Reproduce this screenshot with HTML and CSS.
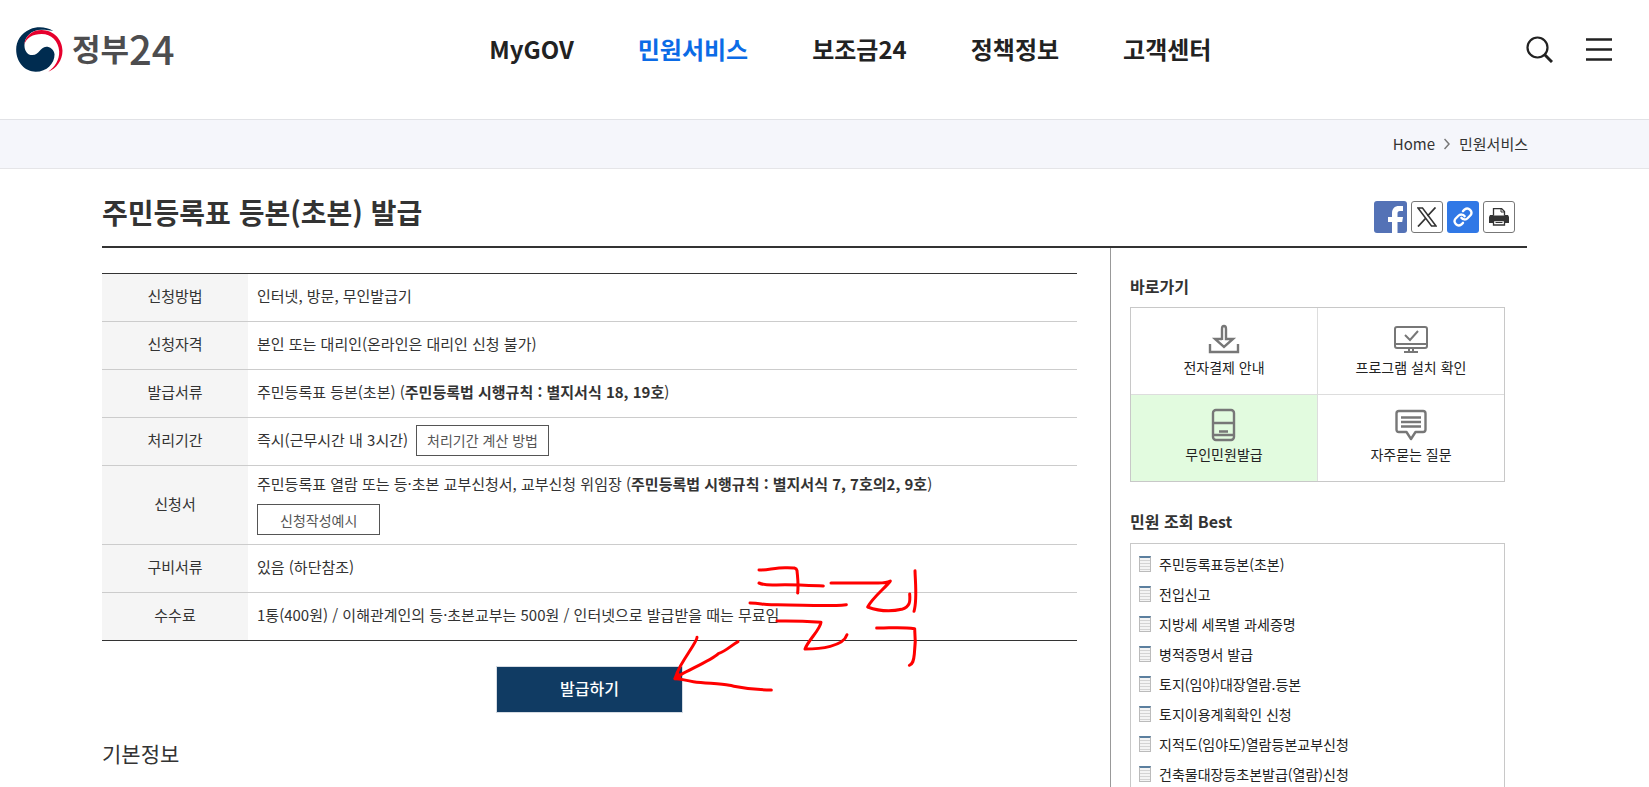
FILE: index.html
```html
<!DOCTYPE html>
<html lang="ko">
<head>
    <meta charset="UTF-8">
    <meta name="viewport" content="width=device-width, initial-scale=1.0">
    <title>주민등록표 등본(초본) 발급 | 정부24</title>
    <link rel="stylesheet" href="styles.css">
</head>
<body>
    <header class="header">
        <a href="#" class="logo">
            <svg class="logo-mark" viewBox="48 80 141 136" aria-hidden="true">
                <path fill="#002c50" d="M160 92C140 80 113 77 90 87C62 99 48 124 48 148C48 188 76 215 107 215C141 215 164 190 164 162C162 148 150 140 139 140C120 141 118 165 97 165C82 165 73 152 73 135C73 108 95 88 124 88C140 88 150 90 160 92Z"/>
                <path fill="#e6002d" d="M73 132C75 108 95 89 125 89C162 90 188 118 188 152C188 180 170 206 145 215C165 200 179 180 178 153C176 122 154 101 125 101C98 101 79 113 73 132Z"/>
            </svg>
            <span class="logo-text">정부<span class="logo-num">24</span></span>
        </a>
        <nav class="gnb">
            <a href="#">MyGOV</a>
            <a href="#" class="active">민원서비스</a>
            <a href="#">보조금24</a>
            <a href="#">정책정보</a>
            <a href="#">고객센터</a>
        </nav>
        <div class="header-util">
            <button type="button" aria-label="검색">
                <svg width="27" height="27" viewBox="0 0 27 27" fill="none" stroke="#222" stroke-width="2.200">
                    <circle cx="11.5" cy="11.5" r="10"/>
                    <path d="M18.5 18.5L26 26" stroke-width="3"/>
                </svg>
            </button>
            <button type="button" aria-label="전체메뉴">
                <svg width="26" height="27" viewBox="0 0 26 27" stroke="#222" stroke-width="2.500">
                    <path d="M0 3.500h26M0 13.500h26M0 23.500h26"/>
                </svg>
            </button>
        </div>
    </header>

    <div class="location">
        <a href="#">Home</a>
        <svg width="6" height="12" viewBox="0 0 6 12" fill="none" stroke="#777" stroke-width="1.5"><path d="M.5 1l4.500 5-4.500 5"/></svg>
        <a href="#">민원서비스</a>
    </div>

    <div class="container">
        <div class="page-title">
            <h1>주민등록표 등본(초본) 발급</h1>
            <div class="share">
                <button type="button" class="facebook" aria-label="페이스북">
                    <svg width="32" height="32" viewBox="0 0 32 32"><path fill="#fff" d="M17 32V21h-4v-5h4v-3.500c0-5 2.500-7.500 7-7.500h4v5h-3c-2 0-2.500 1-2.500 2.500V16H28l-.8 5h-4.700v11z"/></svg>
                </button>
                <button type="button" class="outlined" aria-label="X">
                    <svg width="20" height="20" viewBox="0 0 20 20" fill="none" stroke="#333"><path stroke-width="1.500" d="M1 1h4.500L19 19h-4.500z"/><path stroke-width="1.800" d="M18.500.5l-8 8.500M8.500 11.500L1 19.500"/></svg>
                </button>
                <button type="button" class="link" aria-label="주소 복사">
                    <svg width="20" height="20" viewBox="0 0 24 24" fill="none" stroke="#fff" stroke-width="2.800" stroke-linecap="round"><path d="M10 13a5 5 0 0 0 7.500.5l3.500-3.500a5 5 0 0 0-7-7l-2 2"/><path d="M14 11a5 5 0 0 0-7.500-.5L3 14a5 5 0 0 0 7 7l2-2"/></svg>
                </button>
                <button type="button" class="outlined" aria-label="인쇄">
                    <svg width="20" height="18" viewBox="0 0 20 18"><path fill="#333" d="M1 7h18l1 2v6H0V9z"/><path fill="#fff" stroke="#333" stroke-width="1.300" d="M4.500 7.500v-7h8l3 3v4M4.500 12.500h11v4.500h-11z"/><path fill="none" stroke="#333" d="M12 .5v3.500h3.500M6.500 14.500h7"/></svg>
                </button>
            </div>
        </div>

        <div class="content">
            <main class="main">
                <table class="info-table">
                    <tbody>
                        <tr>
                            <th scope="row">신청방법</th>
                            <td>인터넷, 방문, 무인발급기</td>
                        </tr>
                        <tr>
                            <th scope="row">신청자격</th>
                            <td>본인 또는 대리인(온라인은 대리인 신청 불가)</td>
                        </tr>
                        <tr>
                            <th scope="row">발급서류</th>
                            <td>주민등록표 등본(초본) (<strong>주민등록법 시행규칙 : 별지서식 18, 19호</strong>)</td>
                        </tr>
                        <tr>
                            <th scope="row">처리기간</th>
                            <td>
                                <div class="period">
                                    즉시(근무시간 내 3시간)
                                    <button type="button" class="btn-line">처리기간 계산 방법</button>
                                </div>
                            </td>
                        </tr>
                        <tr>
                            <th scope="row">신청서</th>
                            <td>
                                <p>주민등록표 열람 또는 등·초본 교부신청서, 교부신청 위임장 (<strong>주민등록법 시행규칙 : 별지서식 7, 7호의2, 9호</strong>)</p>
                                <button type="button" class="btn-line wide">신청작성예시</button>
                            </td>
                        </tr>
                        <tr>
                            <th scope="row">구비서류</th>
                            <td>있음 (하단참조)</td>
                        </tr>
                        <tr>
                            <th scope="row">수수료</th>
                            <td>1통(400원) / 이해관계인의 등·초본교부는 500원 / 인터넷으로 발급받을 때는 무료임</td>
                        </tr>
                    </tbody>
                </table>
                <button type="button" class="btn-issue">발급하기</button>
                <h2>기본정보</h2>

                <!-- 손글씨 안내 표시 -->
                <svg class="marker" width="250" height="130" viewBox="570 339 750 390" fill="none" stroke="#f00" stroke-width="9" stroke-linecap="round" stroke-linejoin="round" aria-hidden="true">
                    <path d="M837 360C860 361 885 353 915 353C940 353 949 352 951 362C953 385 956 400 953 429"/>
                    <path d="M837 399C860 409 880 404 915 404C955 404 990 406 1030 408"/>
                    <path d="M810 459C845 460 850 465 880 464C960 463 1030 471 1099 464"/>
                    <path d="M891 513C930 512 970 513 1023 517C1020 540 985 570 975 597C1020 597 1090 590 1101 554"/>
                    <path d="M1053 399H1195C1210 399 1220 399 1231 393C1215 415 1180 440 1163 471C1190 481 1225 487 1265 478C1290 471 1291 455 1289 432"/>
                    <path d="M1305 362C1306 400 1312 450 1302 484"/>
                    <path d="M1190 534C1225 535 1260 530 1304 536C1307 565 1306 590 1303 612C1301 633 1298 643 1288 646"/>
                    <path d="M651 562C652 575 600 640 592 668L585 686C600 670 690 635 715 611C740 602 755 585 774 575"/>
                    <path d="M592 668L600 686H585C600 685 615 692 640 695C680 700 720 701 748 706C780 712 810 720 874 720"/>
                </svg>
            </main>

            <aside class="side">
                <h3>바로가기</h3>
                <ul class="quick">
                    <li>
                        <a href="#">
                            <svg width="34" height="34" viewBox="0 -3 34 34" fill="none" stroke="#777" stroke-width="2.400"><path d="M3 20v8h28v-8M15 16V5q0-3 2-3t2 3v10h7l-9 8-9-8h7"/></svg>
                            전자결제 안내
                        </a>
                    </li>
                    <li>
                        <a href="#">
                            <svg width="34" height="34" viewBox="0 -3 34 34" fill="none" stroke="#777" stroke-width="2"><rect x="1" y="3" width="32" height="21" rx="2"/><path d="M1 20h32M15 24v4M19 24v4M10 28h14M11 11l5 5 8-9"/></svg>
                            프로그램 설치 확인
                        </a>
                    </li>
                    <li class="on">
                        <a href="#">
                            <svg width="34" height="34" viewBox="0 0 34 34" fill="none" stroke="#777" stroke-width="2.400"><rect x="6" y="2" width="21" height="30" rx="3"/><path d="M6 15h21M6 27h21M12 23.500h9"/></svg>
                            무인민원발급
                        </a>
                    </li>
                    <li>
                        <a href="#">
                            <svg width="34" height="34" viewBox="0 0 34 34" fill="none" stroke="#777" stroke-width="2.400"><path stroke-linejoin="round" d="M5 3h24q2.500 0 2.500 2.500v16q0 2.500-2.500 2.500h-7.500L17 31l-4.500-7H5q-2.500 0-2.500-2.500v-16Q2.500 3 5 3z"/><path d="M7 9.500h20M7 14h20M7 18.500h20"/></svg>
                            자주묻는 질문
                        </a>
                    </li>
                </ul>

                <h3>민원 조회 Best</h3>
                <ul class="best">
                    <li><a href="#">주민등록표등본(초본)</a></li>
                    <li><a href="#">전입신고</a></li>
                    <li><a href="#">지방세 세목별 과세증명</a></li>
                    <li><a href="#">병적증명서 발급</a></li>
                    <li><a href="#">토지(임야)대장열람.등본</a></li>
                    <li><a href="#">토지이용계획확인 신청</a></li>
                    <li><a href="#">지적도(임야도)열람등본교부신청</a></li>
                    <li><a href="#">건축물대장등초본발급(열람)신청</a></li>
                </ul>
            </aside>
        </div>
    </div>
</body>
</html>
```
FILE: styles.css
```css
* {
    box-sizing: border-box;
}
body {
    margin: 0;
    font-family: "Noto Sans CJK KR", sans-serif;
    font-size: 15px;
    line-height: 24px;
    color: #333;
    background-color: #fff;
}
h1, h2, h3, p, ul {
    margin: 0;
    padding: 0;
}
ul {
    list-style: none;
}
a {
    color: inherit;
    text-decoration: none;
}
button {
    font-family: inherit;
    cursor: pointer;
}
svg {
    display: block;
}

/* header */
.header {
    display: flex;
    justify-content: space-between;
    align-items: center;
    padding: 24px 37px 44px 16px;
    border-bottom: 1px solid #e1e2e6;
}
.logo {
    display: flex;
    align-items: center;
    gap: 9px;
    height: 51px;
}
.logo-mark {
    width: 47px;
    height: 45px;
}
.logo-text {
    display: flex;
    align-items: center;
    padding-bottom: 4px;
    font-size: 31px;
    font-weight: 700;
    color: #4d4d4f;
}
.logo-num {
    font-size: 40px;
    font-weight: 500;
}
.gnb {
    display: flex;
    gap: 64px;
    padding-bottom: 2px;
    font-size: 24px;
    font-weight: 700;
    color: #222;
}
.gnb .active {
    color: #0b6be6;
}
.header-util {
    display: flex;
    gap: 33px;
}
.header-util button {
    padding: 0;
    border: none;
    background: none;
}

.location {
    display: flex;
    justify-content: flex-end;
    align-items: center;
    gap: 9px;
    padding: 12px 121px 12px 0;
    background-color: #f5f6fb;
    border-bottom: 1px solid #e5e5e8;
}

.container {
    padding: 0 122px 0 102px;
}
.page-title {
    display: flex;
    justify-content: space-between;
    align-items: flex-end;
    padding: 27px 12px 13px 0;
    border-bottom: 2px solid #333;
}
.page-title h1 {
    padding-bottom: 5px;
    font-size: 28px;
    font-weight: 700;
    line-height: 32px;
}
.share {
    display: flex;
    gap: 4px;
}
.share button {
    display: flex;
    justify-content: center;
    align-items: center;
    width: 32px;
    height: 32px;
    padding: 0;
    border: none;
    border-radius: 3px;
}
.share .facebook {
    width: 33px;
    background-color: #5472b6;
}
.share .link {
    background-color: #3078e6;
}
.share .outlined {
    border: 1px solid #777;
    background-color: #fff;
}

.content {
    display: flex;
}
.main {
    position: relative;
    flex: 1;
    padding: 25px 33px 0 0;
}
.info-table {
    width: 100%;
    border-collapse: collapse;
    border-top: 1px solid #333;
    border-bottom: 1px solid #333;
}
.info-table th, .info-table td {
    height: 48px;
    padding: 6px 9px 9px;
    text-align: left;
    border-top: 1px solid #ccc;
}
.info-table tr:first-child th, .info-table tr:first-child td {
    border-top-color: #333;
}
.info-table th {
    width: 146px;
    font-weight: 400;
    text-align: center;
    background-color: #f5f5f5;
}
.period {
    display: flex;
    align-items: center;
    gap: 8px;
}
.btn-line {
    height: 31px;
    padding: 0 10px;
    font-size: 14px;
    color: #555;
    background-color: #fff;
    border: 1px solid #555;
}
.btn-line.wide {
    display: block;
    margin-top: 8px;
    padding: 0 22px;
}
.btn-issue {
    display: block;
    width: 187px;
    height: 47px;
    margin: 25px auto 0;
    padding-bottom: 4px;
    font-size: 16px;
    font-weight: 500;
    color: #fff;
    background-color: #103b63;
    border: 1px solid #d5dbe2;
}
.main h2 {
    margin-top: 26px;
    font-size: 21px;
    font-weight: 400;
    line-height: 28px;
}
.marker {
    position: absolute;
    left: 568px;
    top: 315px;
}

/* right column */
.side {
    width: 417px;
    padding: 26px 22px 0 19px;
    border-left: 1px solid #999;
}
.side h3 {
    font-size: 16px;
    font-weight: 700;
}
.quick {
    display: grid;
    grid-template-columns: 1fr 1fr;
    gap: 1px;
    margin: 9px 0 27px;
    background-color: #ddd;
    border: 1px solid #c8c8c8;
}
.quick li {
    background-color: #fff;
}
.quick .on {
    background-color: #e2fbdf;
}
.quick a {
    display: flex;
    flex-direction: column;
    align-items: center;
    height: 86px;
    padding-top: 13px;
    font-size: 14px;
    color: #222;
}
.best {
    margin-top: 10px;
    padding: 5px 8px 30px;
    border: 1px solid #c8c8c8;
}
.best li {
    display: flex;
    align-items: center;
    gap: 8px;
    height: 30px;
    font-size: 14px;
    color: #222;
}
.best li::before {
    content: "";
    width: 10px;
    height: 13px;
    border: 1px solid #bbb;
    border-top: 2px solid #5b7f9f;
    background: repeating-linear-gradient(#f4f4f4 0 2px, #d4d4d4 2px 3px);
}
```
